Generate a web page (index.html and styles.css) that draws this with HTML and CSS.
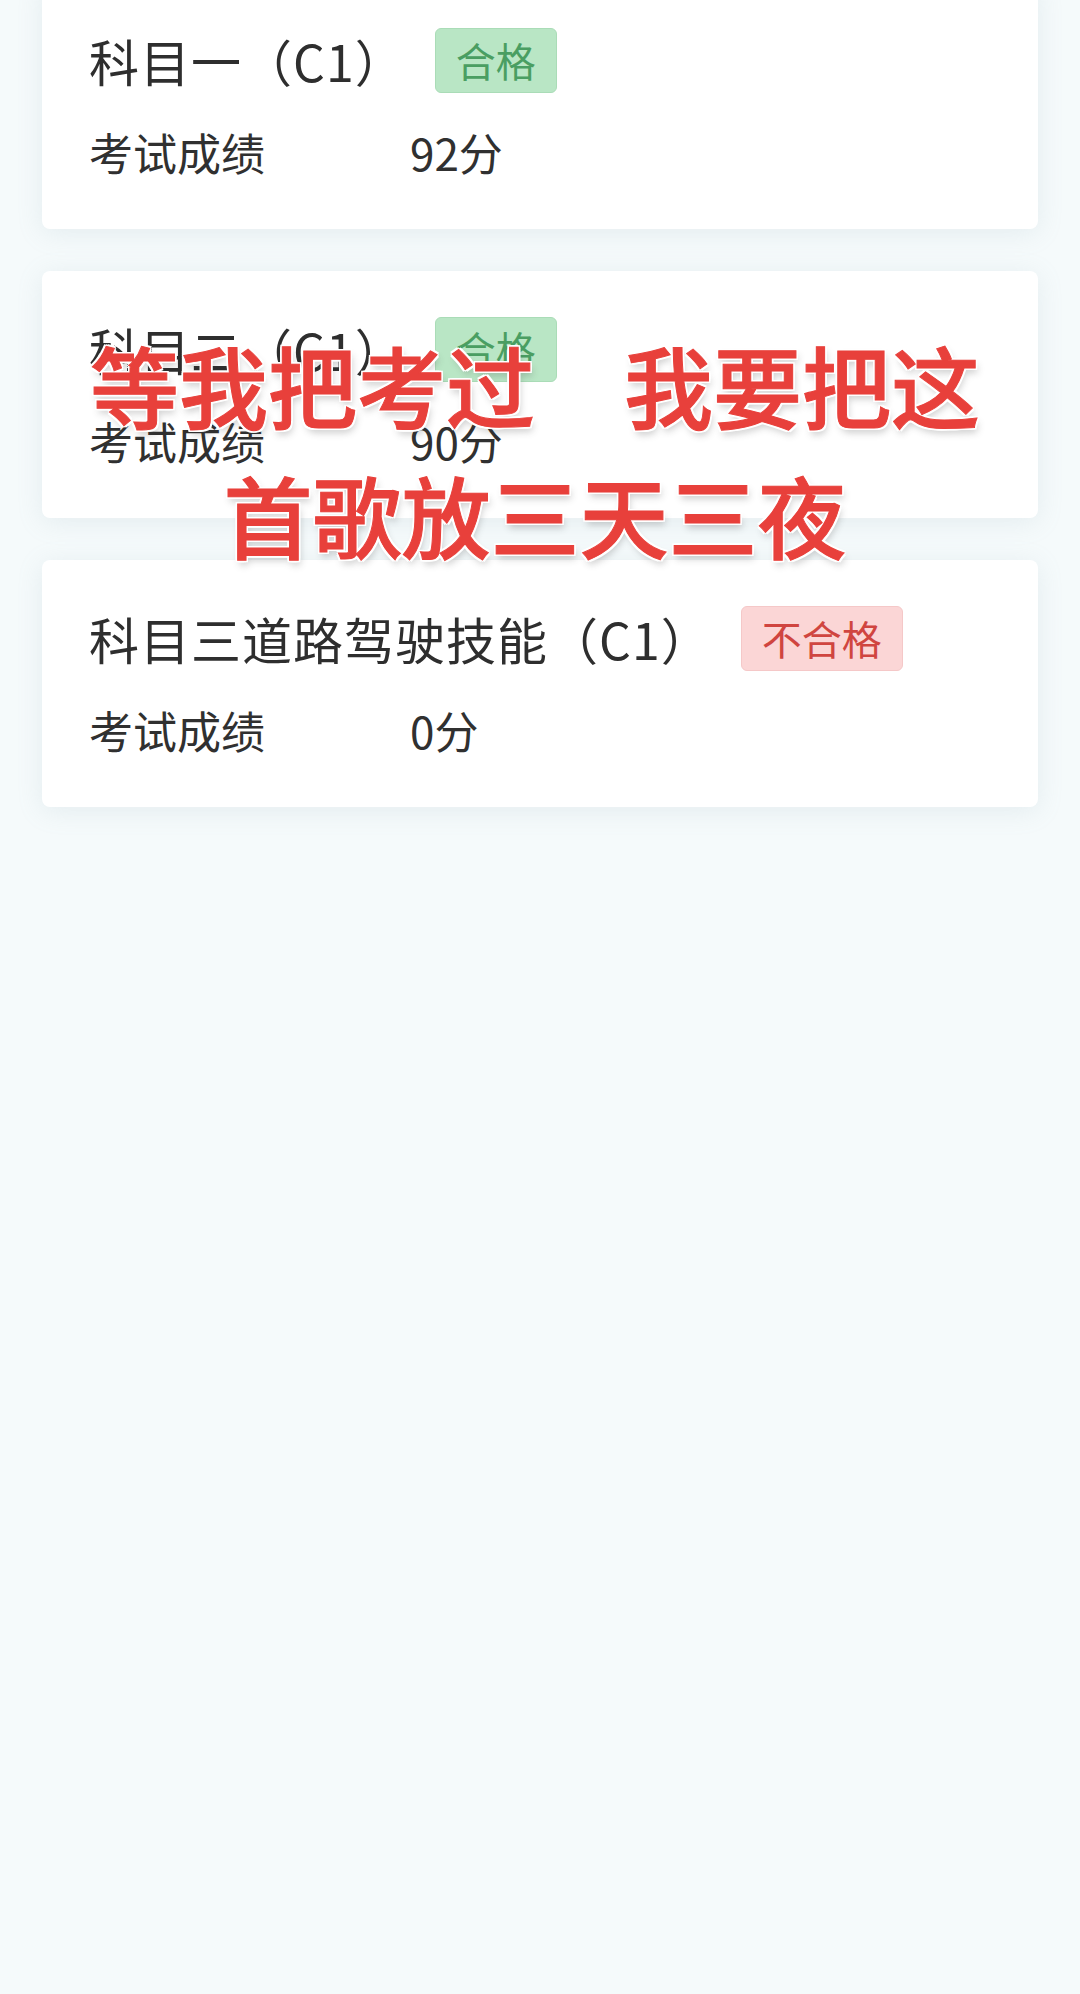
FILE: index.html
```html
<!DOCTYPE html>
<html lang="zh-CN">
<head>
<meta charset="utf-8">
<title>考试成绩</title>
<link rel="stylesheet" href="styles.css">
</head>
<body>
<div class="page">
  <div class="list">
    <div class="card">
      <div class="head"><span class="title">科目一（C1）</span><span class="tag pass">合格</span></div>
      <div class="row"><span class="label">考试成绩</span><span class="value">92分</span></div>
    </div>
    <div class="card">
      <div class="head"><span class="title">科目二（C1）</span><span class="tag pass">合格</span></div>
      <div class="row"><span class="label">考试成绩</span><span class="value">90分</span></div>
    </div>
    <div class="card">
      <div class="head"><span class="title">科目三道路驾驶技能（C1）</span><span class="tag fail">不合格</span></div>
      <div class="row"><span class="label">考试成绩</span><span class="value">0分</span></div>
    </div>
  </div>
  <div class="caption">
    <div class="cap-line">等我把考过　我要把这</div>
    <div class="cap-line">首歌放三天三夜</div>
  </div>
</div>
</body>
</html>
```

FILE: styles.css
```css
html, body {
  margin: 0;
  padding: 0;
}
body {
  background: #f5fafb;
  font-family: "Noto Sans CJK SC", "Noto Sans", sans-serif;
  color: #303030;
}
.page {
  position: relative;
  min-height: 1994px;
  overflow: hidden;
}
.list {
  display: flex;
  flex-direction: column;
  gap: 42px;
  padding: 0 42px;
  margin-top: -18px;
}
.card {
  background: #ffffff;
  border-radius: 8px;
  padding: 46px 47px 47px;
  box-shadow: 0 4px 26px rgba(140, 165, 180, 0.16);
}
.head {
  display: flex;
  align-items: center;
  height: 65px;
}
.title {
  font-size: 50px;
  line-height: 65px;
  color: #2e2e2e;
  letter-spacing: 1px;
}
.tag {
  margin-left: 29px;
  height: 65px;
  padding: 0 20px;
  box-sizing: border-box;
  font-size: 40px;
  border-radius: 6px;
}
.tag.pass {
  background: #b9e6c5;
  color: #4a9e62;
  border: 1px solid #aadcb7;
  line-height: 63px;
}
.tag.fail {
  background: #fbd6d6;
  color: #d04540;
  border: 1px solid #f5c8c8;
  line-height: 63px;
}
.row {
  display: flex;
  align-items: center;
  height: 60px;
  margin-top: 29px;
  font-size: 44px;
  line-height: 60px;
}
.label {
  width: 321px;
  flex: none;
}
.caption {
  position: absolute;
  top: 319px;
  left: 0;
  right: 10px;
  text-align: center;
  font-size: 89px;
  line-height: 130px;
  font-weight: 500;
  color: #e8403b;
  -webkit-text-stroke: 1px #e8403b;
  text-shadow:
    -2px 0 0 #fff, 2px 0 0 #fff, 0 -2px 0 #fff, 0 2px 0 #fff,
    -2px -2px 0 #fff, 2px 2px 0 #fff, -2px 2px 0 #fff, 2px -2px 0 #fff,
    2px 5px 7px rgba(60, 60, 60, 0.25);
}
.cap-line {
  white-space: nowrap;
}
```
